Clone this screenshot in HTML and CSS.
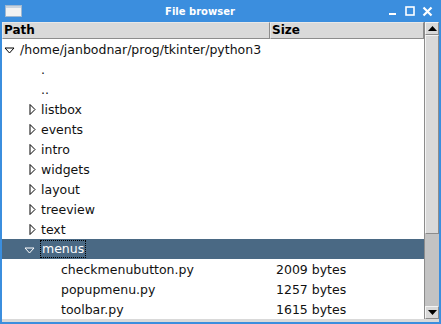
FILE: index.html
```html
<!DOCTYPE html>
<html>
<head>
<meta charset="utf-8">
<link rel="stylesheet" href="styles.css">
</head>
<body>
<div class="window">
  <div class="titlebar">
    <svg class="winicon" width="17" height="12" viewBox="0 0 17 12">
      <rect x="0.5" y="0.5" width="16" height="11" fill="#f2f2f2" stroke="#a0b8d0"/>
      <rect x="1" y="1" width="15" height="2" fill="#c8d4e0"/>
    </svg>
    <div class="title">File browser</div>
    <div class="controls">
      <svg width="10" height="10" viewBox="0 0 10 10"><rect x="1" y="7" width="7" height="2" fill="#fff"/></svg>
      <svg width="10" height="10" viewBox="0 0 10 10"><rect x="1" y="1" width="8" height="8" fill="none" stroke="#fff" stroke-width="1.6"/></svg>
      <svg width="11" height="11" viewBox="0 0 11 11"><path d="M1.5 1.5 L9.5 9.5 M9.5 1.5 L1.5 9.5" stroke="#fff" stroke-width="2.2"/></svg>
    </div>
  </div>
  <div class="content">
    <div class="tree">
      <div class="header">
        <div class="hcell hpath">Path</div>
        <div class="hcell hsize">Size</div>
      </div>
      <div class="rows">
        <div class="row"><div class="name lvl0"><svg class="tri" width="11" height="7" viewBox="0 0 11 7"><path d="M1 1 L10 1 L5.5 6 Z" fill="none" stroke="#000" stroke-width="1"/></svg><span>/home/janbodnar/prog/tkinter/python3</span></div><div class="size"></div></div>
        <div class="row"><div class="name lvl1"><span class="notri"></span><span>.</span></div><div class="size"></div></div>
        <div class="row"><div class="name lvl1"><span class="notri"></span><span>..</span></div><div class="size"></div></div>
        <div class="row"><div class="name lvl1"><svg class="tri" width="7" height="11" viewBox="0 0 7 11"><path d="M1 0.5 L6 5.5 L1 10.5 Z" fill="none" stroke="#000" stroke-width="1"/></svg><span>listbox</span></div><div class="size"></div></div>
        <div class="row"><div class="name lvl1"><svg class="tri" width="7" height="11" viewBox="0 0 7 11"><path d="M1 0.5 L6 5.5 L1 10.5 Z" fill="none" stroke="#000" stroke-width="1"/></svg><span>events</span></div><div class="size"></div></div>
        <div class="row"><div class="name lvl1"><svg class="tri" width="7" height="11" viewBox="0 0 7 11"><path d="M1 0.5 L6 5.5 L1 10.5 Z" fill="none" stroke="#000" stroke-width="1"/></svg><span>intro</span></div><div class="size"></div></div>
        <div class="row"><div class="name lvl1"><svg class="tri" width="7" height="11" viewBox="0 0 7 11"><path d="M1 0.5 L6 5.5 L1 10.5 Z" fill="none" stroke="#000" stroke-width="1"/></svg><span>widgets</span></div><div class="size"></div></div>
        <div class="row"><div class="name lvl1"><svg class="tri" width="7" height="11" viewBox="0 0 7 11"><path d="M1 0.5 L6 5.5 L1 10.5 Z" fill="none" stroke="#000" stroke-width="1"/></svg><span>layout</span></div><div class="size"></div></div>
        <div class="row"><div class="name lvl1"><svg class="tri" width="7" height="11" viewBox="0 0 7 11"><path d="M1 0.5 L6 5.5 L1 10.5 Z" fill="none" stroke="#000" stroke-width="1"/></svg><span>treeview</span></div><div class="size"></div></div>
        <div class="row"><div class="name lvl1"><svg class="tri" width="7" height="11" viewBox="0 0 7 11"><path d="M1 0.5 L6 5.5 L1 10.5 Z" fill="none" stroke="#000" stroke-width="1"/></svg><span>text</span></div><div class="size"></div></div>
        <div class="row selected"><div class="name lvl1"><svg class="tri down" width="11" height="7" viewBox="0 0 11 7"><path d="M1 1 L10 1 L5.5 6 Z" fill="none" stroke="#fff" stroke-width="1"/></svg><span class="focus">menus</span></div><div class="size"></div></div>
        <div class="row"><div class="name lvl2"><span>checkmenubutton.py</span></div><div class="size">2009 bytes</div></div>
        <div class="row"><div class="name lvl2"><span>popupmenu.py</span></div><div class="size">1257 bytes</div></div>
        <div class="row"><div class="name lvl2"><span>toolbar.py</span></div><div class="size">1615 bytes</div></div>
      </div>
    </div>
    <div class="scrollbar">
      <div class="sbtn"><svg width="9" height="5" viewBox="0 0 9 5"><path d="M0 5 L4.5 0 L9 5 Z" fill="#000"/></svg></div>
      <div class="trough">
        <div class="slider"></div>
      </div>
      <div class="sbtn"><svg width="9" height="5" viewBox="0 0 9 5"><path d="M0 0 L4.5 5 L9 0 Z" fill="#000"/></svg></div>
    </div>
  </div>
  <div class="bottom"></div>
</div>
</body>
</html>
```
FILE: styles.css
```css
html, body {
  margin: 0;
  padding: 0;
}
body {
  width: 441px;
  height: 324px;
  overflow: hidden;
  font-family: "DejaVu Sans", sans-serif;
  font-size: 12.5px;
}
.window {
  width: 441px;
  height: 324px;
  box-sizing: border-box;
  background: #3b8ede;
  padding: 0 2px 2px 2px;
  display: flex;
  flex-direction: column;
}
.titlebar {
  height: 22px;
  flex: none;
  display: flex;
  align-items: center;
  margin: 0 -2px;
  padding: 0 8px 0 5px;
}
.winicon {
  flex: none;
}
.title {
  flex: 1;
  text-align: center;
  color: #fff;
  font-weight: bold;
  font-size: 10px;
  padding-right: 10px;
}
.controls {
  display: flex;
  align-items: center;
  gap: 7px;
}
.content {
  flex: 1;
  display: flex;
  background: #fff;
  min-height: 0;
}
.tree {
  flex: 1;
  display: flex;
  flex-direction: column;
  min-width: 0;
}
.header {
  height: 17px;
  flex: none;
  display: flex;
  background: #d9d9d9;
}
.hcell {
  box-sizing: border-box;
  font-weight: bold;
  font-size: 12px;
  color: #000;
  line-height: 15px;
  border-top: 1px solid #e8e8e8;
  border-left: 1px solid #e8e8e8;
  border-right: 1px solid #8c8c8c;
  border-bottom: 1px solid #8c8c8c;
}
.hpath {
  width: 268px;
  padding-left: 1px;
}
.hsize {
  flex: 1;
  padding-left: 1px;
}
.rows {
  flex: 1;
  display: flex;
  flex-direction: column;
}
.row {
  height: 20px;
  flex: none;
  display: flex;
  align-items: center;
  color: #111;
}
.row.selected {
  background: #4a6984;
  color: #fff;
}
.name {
  width: 268px;
  box-sizing: border-box;
  flex: none;
  display: flex;
  align-items: center;
  white-space: nowrap;
}
.lvl0 { padding-left: 2px; }
.lvl1 { padding-left: 27px; }
.lvl2 { padding-left: 59px; }
.tri {
  flex: none;
  margin-right: 5px;
}
.lvl0 .tri {
  margin-top: 2px;
}
.tri.down {
  margin-left: -5px;
  margin-right: 6px;
  margin-top: 2px;
}
.notri {
  display: inline-block;
  width: 12px;
}
.focus {
  outline: 1px dotted #000;
  outline-offset: 0;
  padding: 0 1px;
  line-height: 16px;
}
.size {
  padding-left: 6px;
  white-space: nowrap;
}
.scrollbar {
  width: 15px;
  flex: none;
  box-sizing: border-box;
  background: #c3c3c3;
  border-left: 1px solid #8c8c8c;
  display: flex;
  flex-direction: column;
}
.sbtn {
  height: 13px;
  flex: none;
  box-sizing: border-box;
  background: #d9d9d9;
  border-top: 1px solid #f4f4f4;
  border-left: 1px solid #f4f4f4;
  border-right: 1px solid #8c8c8c;
  border-bottom: 1px solid #8c8c8c;
  display: flex;
  align-items: center;
  justify-content: center;
}
.trough {
  flex: 1;
  display: flex;
  flex-direction: column;
}
.slider {
  height: 199px;
  box-sizing: border-box;
  background: #d9d9d9;
  border-top: 1px solid #f4f4f4;
  border-left: 1px solid #f4f4f4;
  border-right: 1px solid #8c8c8c;
  border-bottom: 1px solid #8c8c8c;
}
.bottom {
  height: 3px;
  flex: none;
  background: #d9d9d9;
}
```
